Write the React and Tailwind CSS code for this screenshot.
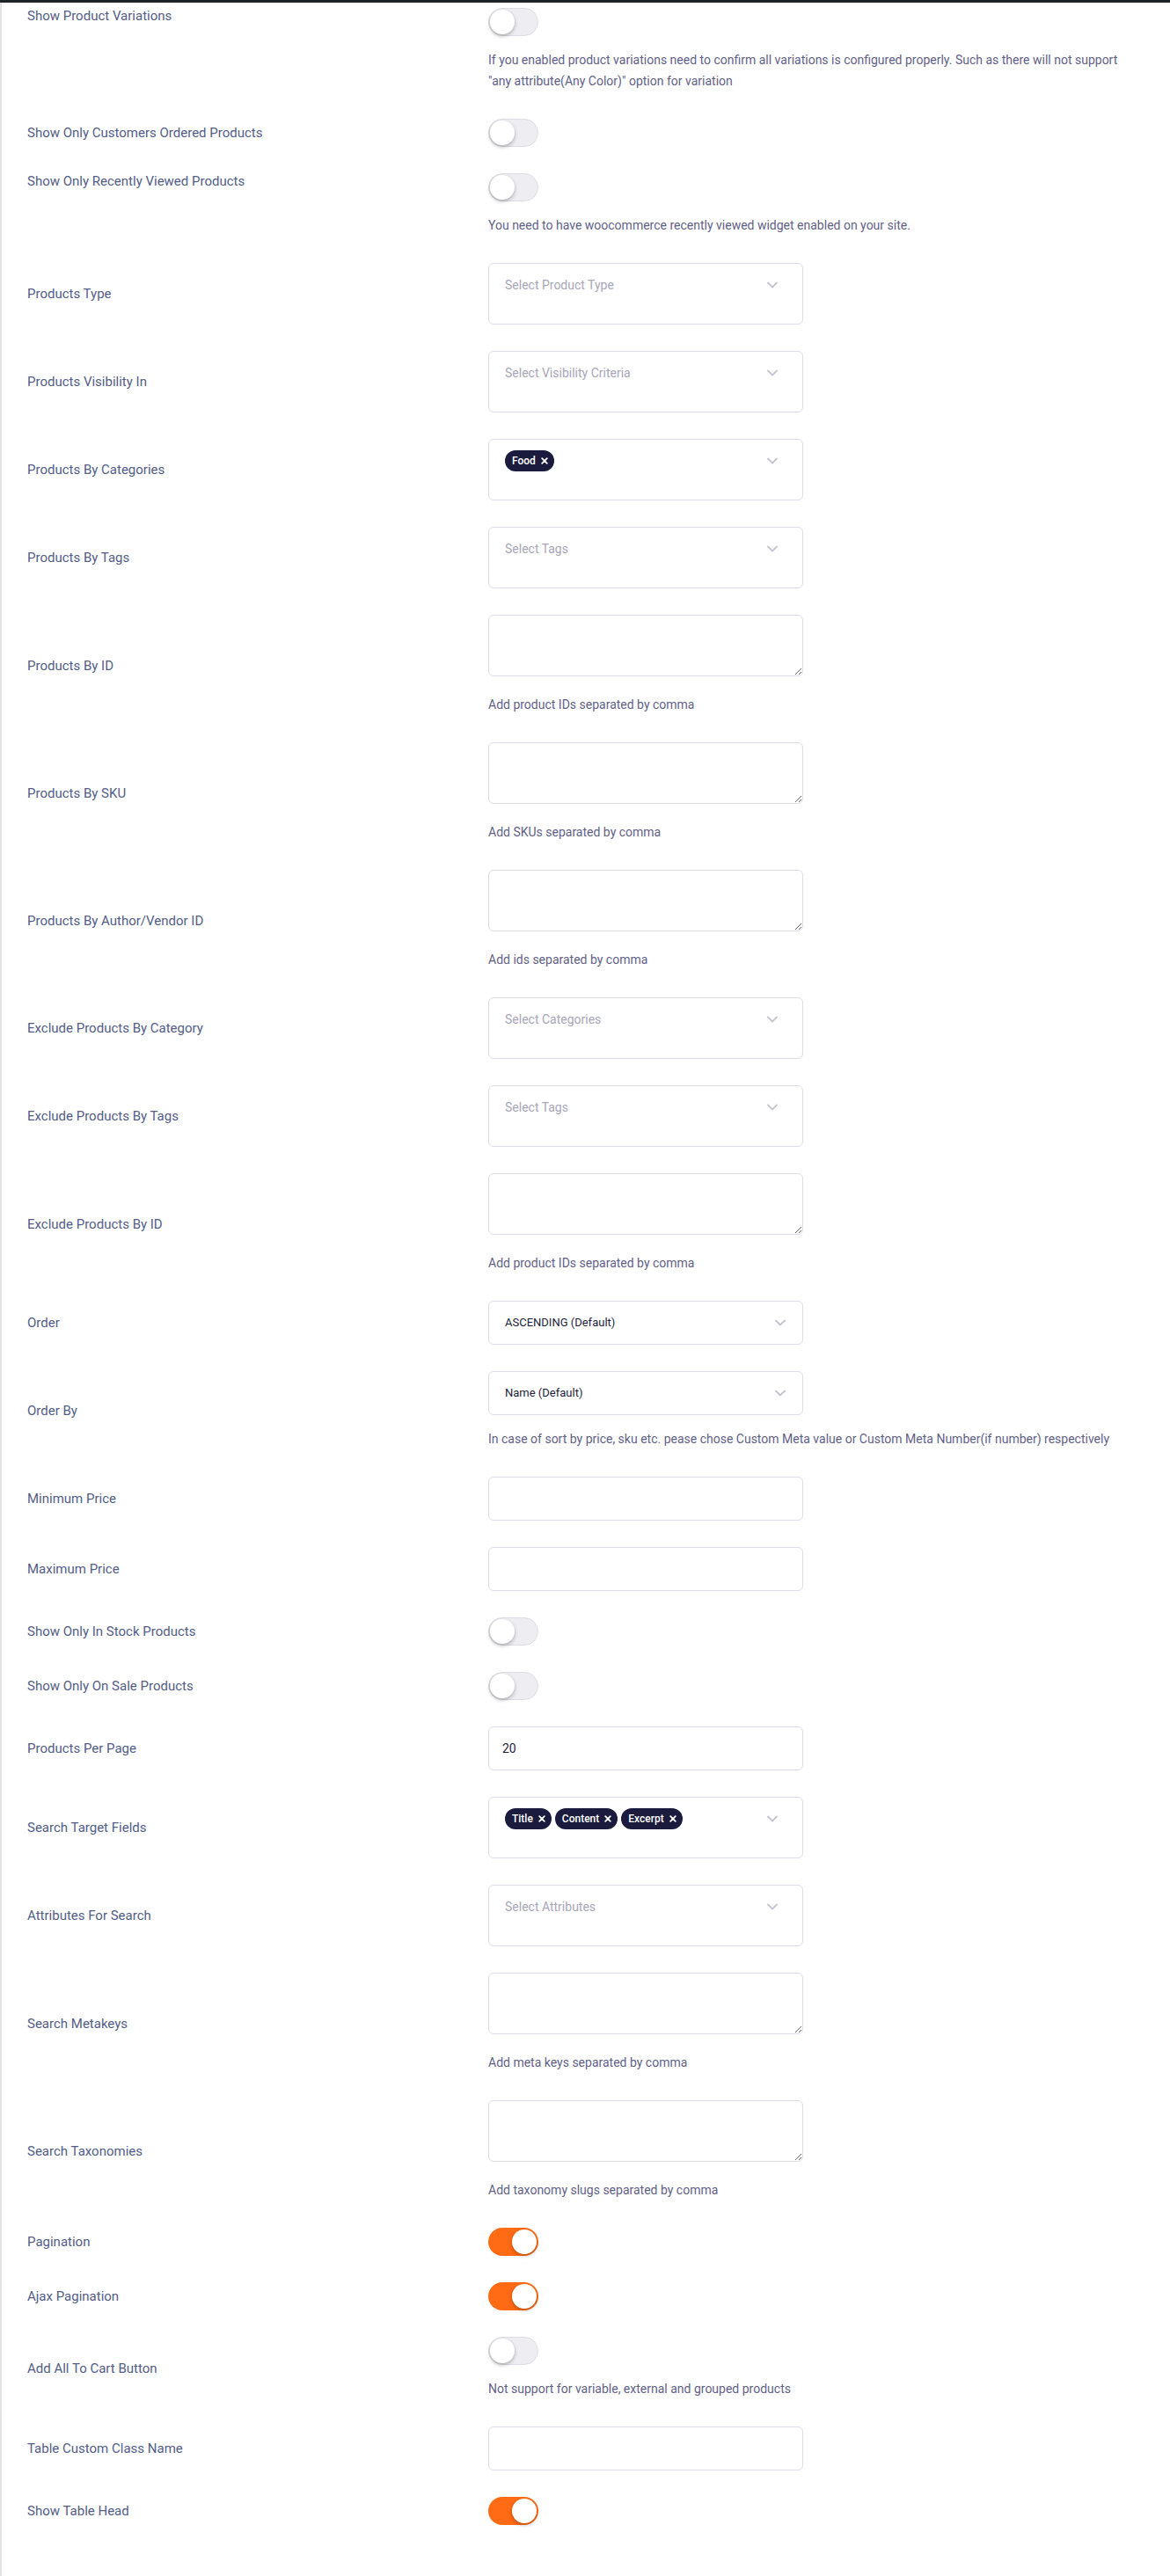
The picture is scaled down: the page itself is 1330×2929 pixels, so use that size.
import React from "react";

const Chevron = () => (
  <svg width="12" height="8" viewBox="0 0 12 8" fill="none">
    <path d="M1 1.5l5 5 5-5" stroke="#c6c4d0" strokeWidth="1.8" strokeLinecap="round" strokeLinejoin="round" />
  </svg>
);

const Chip = ({ children }) => (
  <span className="flex h-6 items-center gap-[6px] rounded-full bg-[#1b1b3d] pl-2 pr-[7px] text-[12px] font-medium text-white">
    {children}
    <svg width="8" height="8" viewBox="0 0 8 8">
      <path d="M1.2 1.2l5.6 5.6M6.8 1.2L1.2 6.8" stroke="#fff" strokeWidth="1.8" strokeLinecap="round" />
    </svg>
  </span>
);

const Toggle = ({ on }) =>
  on ? (
    <div className="relative h-8 w-[57px] rounded-full bg-[#ff6a14]">
      <span className="absolute right-[2px] top-[2px] h-7 w-7 rounded-full bg-white shadow-[0_2px_4px_rgba(0,0,0,0.25)]" />
    </div>
  ) : (
    <div className="relative h-8 w-[57px] rounded-full border border-[#dcdce3] bg-[#eeeef2]">
      <span className="absolute left-[1px] top-[1px] h-7 w-7 rounded-full bg-white shadow-[0_2px_4px_rgba(0,0,0,0.28)]" />
    </div>
  );

const MultiSelect = ({ placeholder, chips }) => (
  <div className="flex h-[70px] w-[358px] items-start justify-between rounded-md border border-[#dddbe8] bg-white pl-[18px] pr-[28px] pt-3">
    <div className="flex h-6 items-center gap-1">
      {chips ? (
        chips.map((c) => <Chip key={c}>{c}</Chip>)
      ) : (
        <span className="text-[14px] text-[#a8a6b8]">{placeholder}</span>
      )}
    </div>
    <div className="flex h-6 items-center">
      <Chevron />
    </div>
  </div>
);

const Select = ({ value }) => (
  <div className="flex h-[50px] w-[358px] items-center justify-between rounded-md border border-[#dddbe8] bg-white pl-[18px] pr-[19px]">
    <span className="text-[13px] text-[#1e1e3c]">{value}</span>
    <Chevron />
  </div>
);

const TextInput = ({ value }) => (
  <div className="flex h-[50px] w-[358px] items-center rounded-md border border-[#dddbe8] bg-white px-[15px] text-[14px] text-[#1e1e3c]">
    {value}
  </div>
);

const TextArea = () => (
  <textarea className="block h-[70px] w-[358px] rounded-md border border-[#dddbe8] bg-white outline-none" />
);

const rows = [
  {
    label: "Show Product Variations",
    type: "toggle",
    top: true,
    help: 'If you enabled product variations need to confirm all variations is configured properly. Such as there will not support "any attribute(Any Color)" option for variation',
  },
  { label: "Show Only Customers Ordered Products", type: "toggle" },
  {
    label: "Show Only Recently Viewed Products",
    type: "toggle",
    top: true,
    help: "You need to have woocommerce recently viewed widget enabled on your site.",
  },
  { label: "Products Type", type: "multi", placeholder: "Select Product Type" },
  { label: "Products Visibility In", type: "multi", placeholder: "Select Visibility Criteria" },
  { label: "Products By Categories", type: "multi", chips: ["Food"] },
  { label: "Products By Tags", type: "multi", placeholder: "Select Tags" },
  { label: "Products By ID", type: "textarea", help: "Add product IDs separated by comma" },
  { label: "Products By SKU", type: "textarea", help: "Add SKUs separated by comma" },
  { label: "Products By Author/Vendor ID", type: "textarea", help: "Add ids separated by comma" },
  { label: "Exclude Products By Category", type: "multi", placeholder: "Select Categories" },
  { label: "Exclude Products By Tags", type: "multi", placeholder: "Select Tags" },
  { label: "Exclude Products By ID", type: "textarea", help: "Add product IDs separated by comma" },
  { label: "Order", type: "select", value: "ASCENDING (Default)" },
  {
    label: "Order By",
    type: "select",
    value: "Name (Default)",
    help: "In case of sort by price, sku etc. pease chose Custom Meta value or Custom Meta Number(if number) respectively",
  },
  { label: "Minimum Price", type: "input" },
  { label: "Maximum Price", type: "input" },
  { label: "Show Only In Stock Products", type: "toggle" },
  { label: "Show Only On Sale Products", type: "toggle" },
  { label: "Products Per Page", type: "input", value: "20" },
  { label: "Search Target Fields", type: "multi", chips: ["Title", "Content", "Excerpt"] },
  { label: "Attributes For Search", type: "multi", placeholder: "Select Attributes" },
  { label: "Search Metakeys", type: "textarea", help: "Add meta keys separated by comma" },
  { label: "Search Taxonomies", type: "textarea", help: "Add taxonomy slugs separated by comma" },
  { label: "Pagination", type: "toggle", on: true },
  { label: "Ajax Pagination", type: "toggle", on: true },
  {
    label: "Add All To Cart Button",
    type: "toggle",
    help: "Not support for variable, external and grouped products",
  },
  { label: "Table Custom Class Name", type: "input" },
  { label: "Show Table Head", type: "toggle", on: true },
];

const Control = ({ row }) => {
  if (row.type === "toggle") return <Toggle on={row.on} />;
  if (row.type === "multi") return <MultiSelect placeholder={row.placeholder} chips={row.chips} />;
  if (row.type === "select") return <Select value={row.value} />;
  if (row.type === "input") return <TextInput value={row.value} />;
  return <TextArea />;
};

const Row = ({ row }) => (
  <div className={`flex ${row.top ? "items-start" : "items-center"}`}>
    <div
      className={`w-[553px] shrink-0 pl-[29px] text-[15px] text-[#535d86] ${
        row.top ? "leading-[18px]" : "leading-5"
      }`}
    >
      {row.label}
    </div>
    <div className="w-[730px]">
      <Control row={row} />
      {row.help && (
        <p
          className={`${
            row.type === "textarea" ? "mt-5" : "mt-[15px]"
          } pb-px text-[14px] leading-6 text-[#625f87]`}
        >
          {row.help}
        </p>
      )}
    </div>
  </div>
);

export default function App() {
  return (
    <div className="min-h-[2929px] bg-white font-['Roboto',sans-serif]">
      <div className="h-[3px] bg-[#1d2327]" />
      <div className="flex min-h-[2926px] flex-col gap-[30px] border-l-2 border-[#e4e4e8] pb-[54px] pt-[6px]">
        {rows.map((row, i) => (
          <Row key={i} row={row} />
        ))}
      </div>
    </div>
  );
}
